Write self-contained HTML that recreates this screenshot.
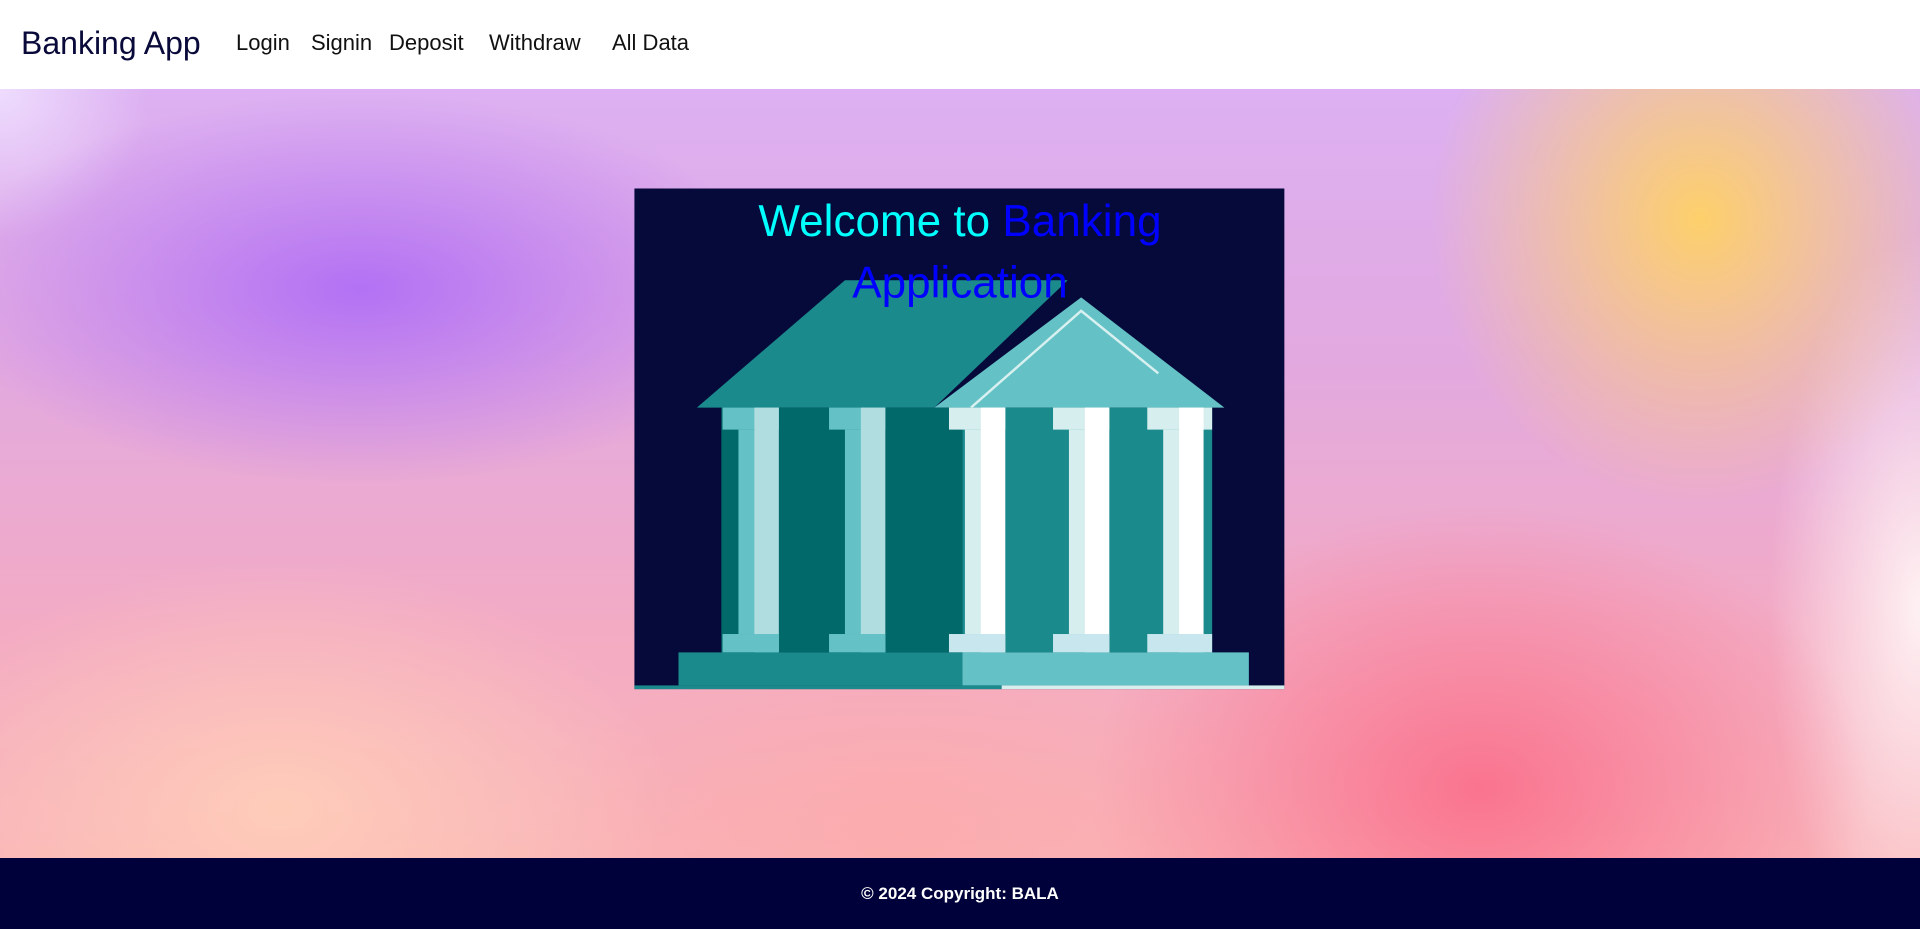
<!DOCTYPE html>
<html><head><meta charset="utf-8"><style>
*{margin:0;padding:0;box-sizing:border-box}
body{width:1920px;height:929px;overflow:hidden;font-family:"Liberation Sans",sans-serif;position:relative;background:#fff}
nav{position:absolute;left:0;top:0;width:1920px;height:89px;background:#fff}
nav span{position:absolute;top:30px;font-size:22px;color:#111}
.brand{position:absolute;left:21px;top:25px;font-size:32px;color:#0a0a3a}
main{position:absolute;left:0;top:89px;width:1920px;height:769px;
background:
radial-gradient(ellipse 360px 380px at 1700px 130px,rgba(255,210,100,.95),rgba(255,210,100,0) 75%),
radial-gradient(ellipse 560px 260px at 360px 200px,rgba(176,110,245,.95),rgba(176,110,245,0) 75%),
radial-gradient(ellipse 520px 380px at 1480px 700px,rgba(250,105,135,.85),rgba(250,105,135,0) 75%),
radial-gradient(ellipse 520px 330px at 280px 720px,rgba(255,205,185,.95),rgba(255,205,185,0) 75%),
radial-gradient(ellipse 500px 260px at 900px 740px,rgba(252,170,170,.8),rgba(252,170,170,0) 75%),
radial-gradient(ellipse 200px 500px at 1920px 520px,rgba(255,245,245,.95),rgba(255,245,245,0) 75%),
radial-gradient(ellipse 200px 200px at 0px 0px,rgba(240,225,255,.9),rgba(240,225,255,0) 75%),
linear-gradient(180deg,#dcb0f2 0%,#e2a9e0 35%,#f3abc4 70%,#f9b3b8 100%);}
footer{position:absolute;left:0;top:858px;width:1920px;height:71px;background:#00003a;color:#fff;text-align:center;font-size:17px;line-height:71px;font-weight:bold}
svg{position:absolute;left:0;top:0}
</style></head><body>
<nav><div class="brand">Banking App</div>
<span style="left:236px">Login</span><span style="left:311px">Signin</span><span style="left:389px">Deposit</span><span style="left:489px">Withdraw</span><span style="left:612px">All Data</span></nav>
<main></main>
<svg width="1920" height="929" viewBox="0 0 1568 759">
<rect x="518" y="154" width="531" height="409" fill="#050a3a"/>
<polygon points="569,333 690,229 872,229 763,333" fill="#1a8a8c"/>
<polygon points="763,333 883,243 1000,333" fill="#64c2c6"/>
<polyline points="793,333 883,254 946,305" fill="none" stroke="#d8f0f0" stroke-width="2"/>
<rect x="589" y="333" width="197" height="200" fill="#02696a"/>
<rect x="786" y="333" width="204" height="200" fill="#1a8a8c"/>
<g>
<rect x="590" y="333" width="46" height="18" fill="#64c2c6"/><rect x="603" y="351" width="20" height="167" fill="#64c2c6"/><rect x="616" y="333" width="20" height="200" fill="#b0dde0"/><rect x="590" y="518" width="46" height="15" fill="#64c2c6"/>
<rect x="677" y="333" width="46" height="18" fill="#64c2c6"/><rect x="690" y="351" width="20" height="167" fill="#64c2c6"/><rect x="703" y="333" width="20" height="200" fill="#b0dde0"/><rect x="677" y="518" width="46" height="15" fill="#64c2c6"/>
<rect x="775" y="333" width="46" height="18" fill="#d6eeee"/><rect x="788" y="351" width="20" height="167" fill="#d6eeee"/><rect x="801" y="333" width="20" height="200" fill="#fff"/><rect x="775" y="518" width="46" height="15" fill="#c8e6ee"/>
<rect x="860" y="333" width="46" height="18" fill="#d6eeee"/><rect x="873" y="351" width="20" height="167" fill="#d6eeee"/><rect x="886" y="333" width="20" height="200" fill="#fff"/><rect x="860" y="518" width="46" height="15" fill="#c8e6ee"/>
<rect x="937" y="333" width="53" height="18" fill="#d6eeee"/><rect x="950" y="351" width="20" height="167" fill="#d6eeee"/><rect x="963" y="333" width="20" height="200" fill="#fff"/><rect x="937" y="518" width="53" height="15" fill="#c8e6ee"/>
</g>
<rect x="554" y="533" width="232" height="27" fill="#1a8a8c"/>
<rect x="786" y="533" width="234" height="27" fill="#64c2c6"/>
<rect x="518" y="560" width="300" height="3" fill="#1a8a8c"/>
<rect x="818" y="560" width="231" height="3" fill="#d6eeee"/>
<text x="784" y="193" text-anchor="middle" font-family="Liberation Sans,sans-serif" font-size="36" fill="#00ffff">Welcome to <tspan fill="#0000ff">Banking</tspan></text>
<text x="784" y="243" text-anchor="middle" font-family="Liberation Sans,sans-serif" font-size="36" fill="#0000ff">Application</text>
</svg>
<footer>© 2024 Copyright: BALA</footer>
</body></html>
